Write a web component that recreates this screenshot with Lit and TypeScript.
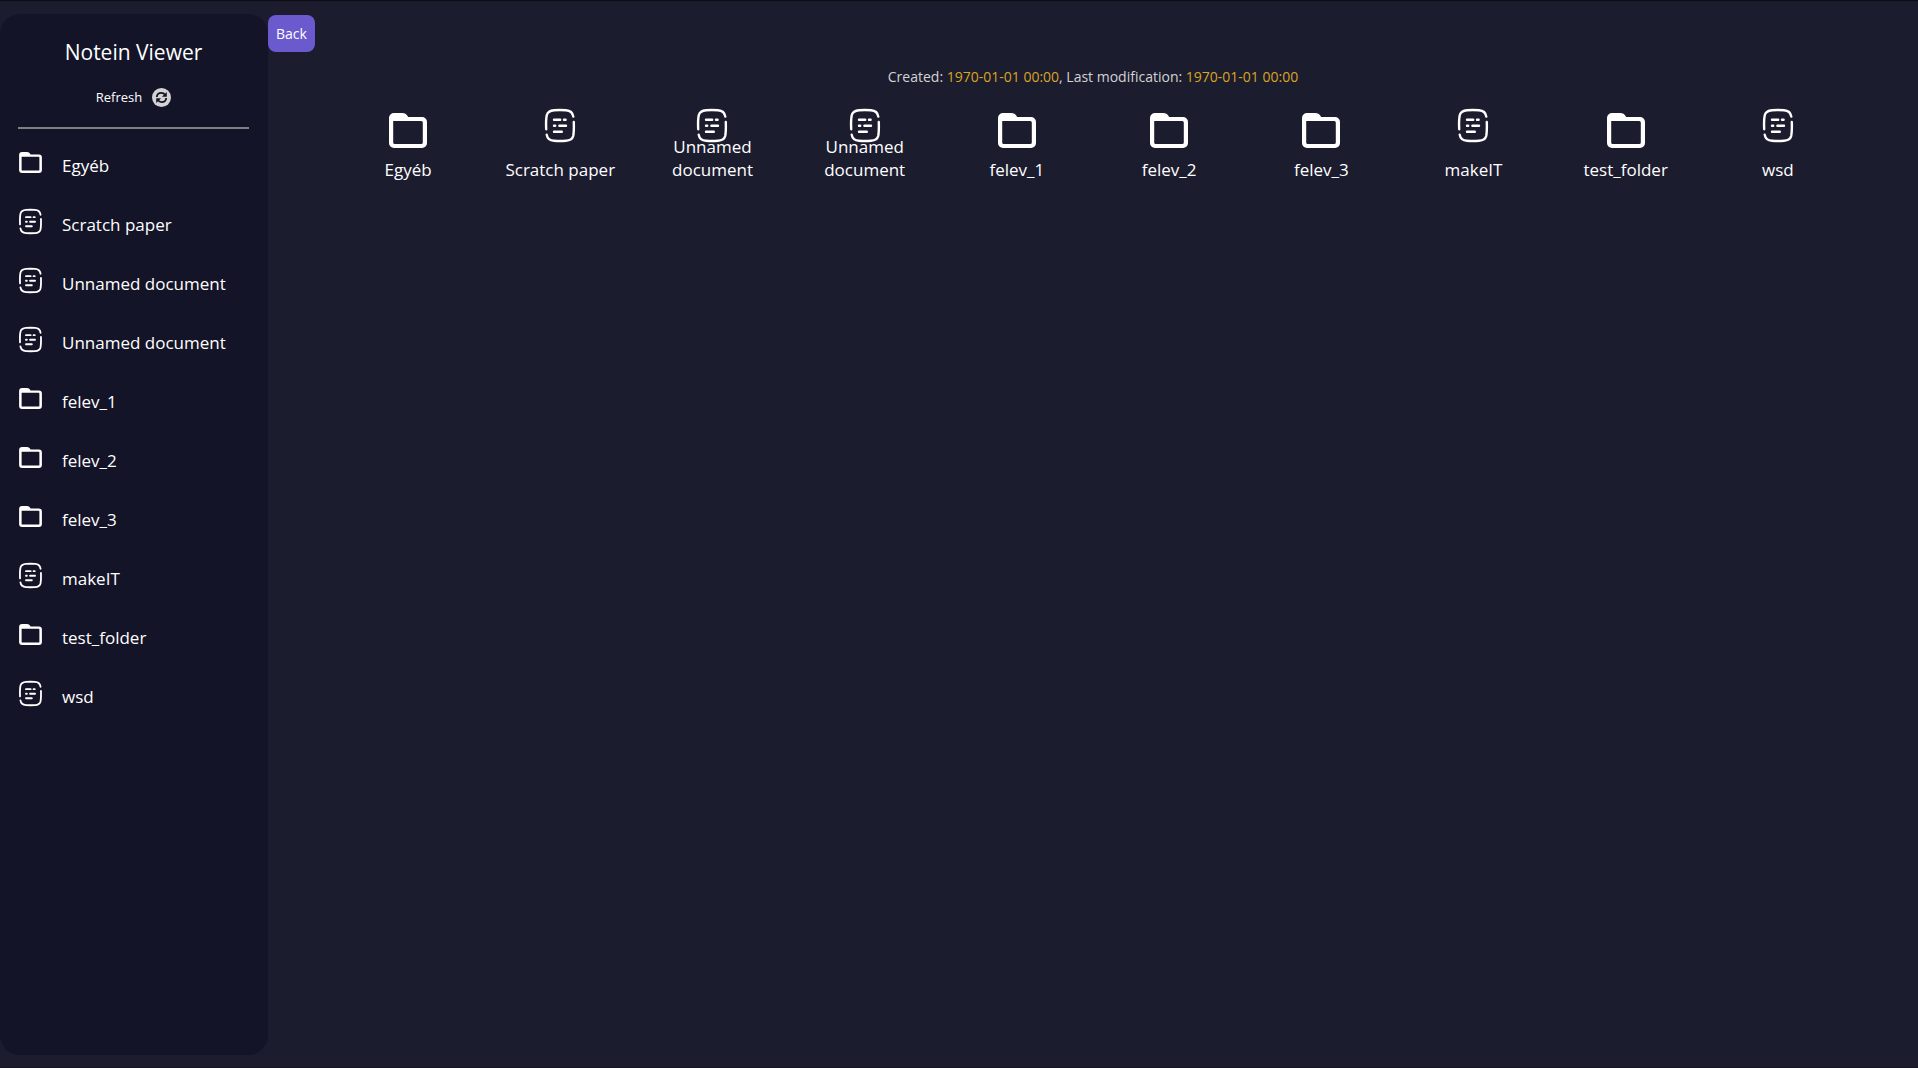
import { LitElement, html, css, svg } from "lit";
import { customElement, property } from "lit/decorators.js";

type Kind = "folder" | "note";
interface Entry {
  name: string;
  kind: Kind;
}

const ENTRIES: Entry[] = [
  { name: "Egyéb", kind: "folder" },
  { name: "Scratch paper", kind: "note" },
  { name: "Unnamed document", kind: "note" },
  { name: "Unnamed document", kind: "note" },
  { name: "felev_1", kind: "folder" },
  { name: "felev_2", kind: "folder" },
  { name: "felev_3", kind: "folder" },
  { name: "makeIT", kind: "note" },
  { name: "test_folder", kind: "folder" },
  { name: "wsd", kind: "note" },
];

const folderShape = svg`
  <path fill="currentColor" fill-rule="evenodd" d="M5 0 H13 C16.4 0 17.6 1.6 19.2 4 H33 A5 5 0 0 1 38 9 V30 A5 5 0 0 1 33 35 H5 A5 5 0 0 1 0 30 V5 A5 5 0 0 1 5 0 Z M4.2 8 V29.4 A1.6 1.6 0 0 0 5.8 31 H32.2 A1.6 1.6 0 0 0 33.8 29.4 V9.6 A1.6 1.6 0 0 0 32.2 8 Z"/>`;

const noteShape = svg`
  <g fill="none" stroke="currentColor" stroke-width="2.4" stroke-linecap="round">
    <path d="M1.2 20.3 C0.9 14 1 9.5 1.8 6 C2.8 2.4 5.5 1.5 9 1.2 Q15 0.8 21 1.2 C25.5 1.5 27.6 3 28.3 7.6"/>
    <path d="M28.8 13 C29 18.5 28.9 23.5 28.2 27 C27.3 30.6 24.5 31.5 21 31.8 Q15 32.2 9 31.8 C4.5 31.5 2.4 30 1.7 25.6"/>
    <path d="M9 10.8 H15.2 M19 10.8 H20.6 M9 16.8 H10.2 M14.4 16.8 H21 M9 22.8 H16.8"/>
  </g>`;

@customElement("entry-icon")
class EntryIcon extends LitElement {
  @property() kind: Kind = "folder";

  static styles = css`
    :host {
      display: flex;
      align-items: center;
      justify-content: center;
    }
    svg {
      display: block;
      width: 100%;
      height: 100%;
      overflow: visible;
    }
  `;

  render() {
    return this.kind === "folder"
      ? html`<svg viewBox="0 0 38 35" aria-hidden="true">${folderShape}</svg>`
      : html`<svg viewBox="0 0 30 33" aria-hidden="true">${noteShape}</svg>`;
  }
}

@customElement("app-root")
class AppRoot extends LitElement {
  static styles = css`
    :host {
      display: flex;
      box-sizing: border-box;
      min-height: 100vh;
      border-top: 1px solid #0c0c12;
      border-bottom: 1px solid #14141f;
      padding: 13px 0 12px;
      background: #1c1c2f;
      color: #ffffff;
      font-family: "Open Sans", "Noto Sans", sans-serif;
      font-size: 17px;
      line-height: 23px;
    }
    button {
      border: 0;
      margin: 0;
      font: inherit;
      color: inherit;
      background: none;
      cursor: pointer;
    }
    a {
      color: inherit;
      text-decoration: none;
    }
    .sidebar {
      display: flex;
      flex-direction: column;
      flex: 0 0 268px;
      box-sizing: border-box;
      padding: 22px 19px 22px 18px;
      border-radius: 20px;
      background: #141428;
    }
    .title {
      margin: 0;
      font-size: 21px;
      font-weight: 400;
      line-height: 32px;
      text-align: center;
    }
    .refresh {
      display: flex;
      align-items: center;
      align-self: center;
      gap: 10px;
      padding: 0;
      margin-top: 17px;
      font-size: 13px;
      line-height: 24px;
    }
    .refresh svg {
      width: 19px;
      height: 19px;
    }
    .divider {
      width: 100%;
      height: 2px;
      margin: 18px 0 0;
      border: 0;
      background: #808080;
    }
    .list {
      display: grid;
      gap: 29px;
      margin: 21px 0 0;
      padding: 0 0 0 1px;
      list-style: none;
    }
    .entry {
      display: flex;
      align-items: center;
      gap: 20px;
      height: 30px;
      white-space: nowrap;
    }
    .entry entry-icon {
      width: 23px;
      height: 25px;
      margin-bottom: 5px;
    }
    .entry .folder {
      height: 21px;
    }
    .main {
      display: flex;
      flex-direction: column;
      flex: 1;
      min-width: 0;
      padding-top: 1px;
    }
    .back {
      align-self: flex-start;
      padding: 8px;
      border-radius: 8px;
      background: #6a5acd;
      font-size: 14px;
      line-height: 21px;
    }
    .dates {
      margin: 14px 0 0;
      color: #d3d3d3;
      font-size: 14px;
      line-height: 22px;
      text-align: center;
    }
    .date {
      color: #daa520;
    }
    .tiles {
      display: grid;
      grid-template-columns: repeat(auto-fill, minmax(140px, 1fr));
      margin: 17px 64px 0;
      padding: 0;
      list-style: none;
    }
    .tile {
      display: grid;
      justify-items: center;
      height: 76px;
      padding: 0 20px;
      text-align: center;
    }
    .tile entry-icon {
      grid-area: 1 / 1;
      align-self: start;
      width: 30px;
      height: 33px;
      margin-top: 4px;
    }
    .tile .folder {
      width: 38px;
      height: 35px;
      margin-top: 8px;
    }
    .tile .label {
      grid-area: 1 / 1;
      align-self: end;
    }
  `;

  render() {
    return html`
      <aside class="sidebar">
        <h1 class="title">Notein Viewer</h1>
        <button class="refresh" type="button">
          Refresh
          <svg viewBox="0 0 19 19" aria-hidden="true">
            <circle cx="9.5" cy="9.5" r="9.5" fill="#d3d3d3" />
            <g fill="none" stroke="#141428" stroke-width="1.8">
              <path d="M4.8 9 C5 6.3 7 4.9 9.4 4.9 C11 4.9 12.2 5.5 13.2 6.9" />
              <path d="M14.2 10 C14 12.7 12 14.1 9.6 14.1 C8 14.1 6.8 13.5 5.8 12.1" />
            </g>
            <path fill="#141428" d="M14.8 3.9 V8.8 H9.9 Z M4.2 15.1 V10.2 H9.1 Z" />
          </svg>
        </button>
        <hr class="divider" />
        <nav>
          <ul class="list">
            ${ENTRIES.map(
              (e) => html`<li>
                <a class="entry" href="#">
                  <entry-icon class=${e.kind} .kind=${e.kind}></entry-icon>
                  <span>${e.name}</span>
                </a>
              </li>`
            )}
          </ul>
        </nav>
      </aside>
      <main class="main">
        <button class="back" type="button">Back</button>
        <p class="dates">
          Created: <span class="date">1970-01-01 00:00</span>, Last modification:
          <span class="date">1970-01-01 00:00</span>
        </p>
        <ul class="tiles">
          ${ENTRIES.map(
            (e) => html`<li>
              <a class="tile" href="#">
                <entry-icon class=${e.kind} .kind=${e.kind}></entry-icon>
                <span class="label">${e.name}</span>
              </a>
            </li>`
          )}
        </ul>
      </main>
    `;
  }
}
